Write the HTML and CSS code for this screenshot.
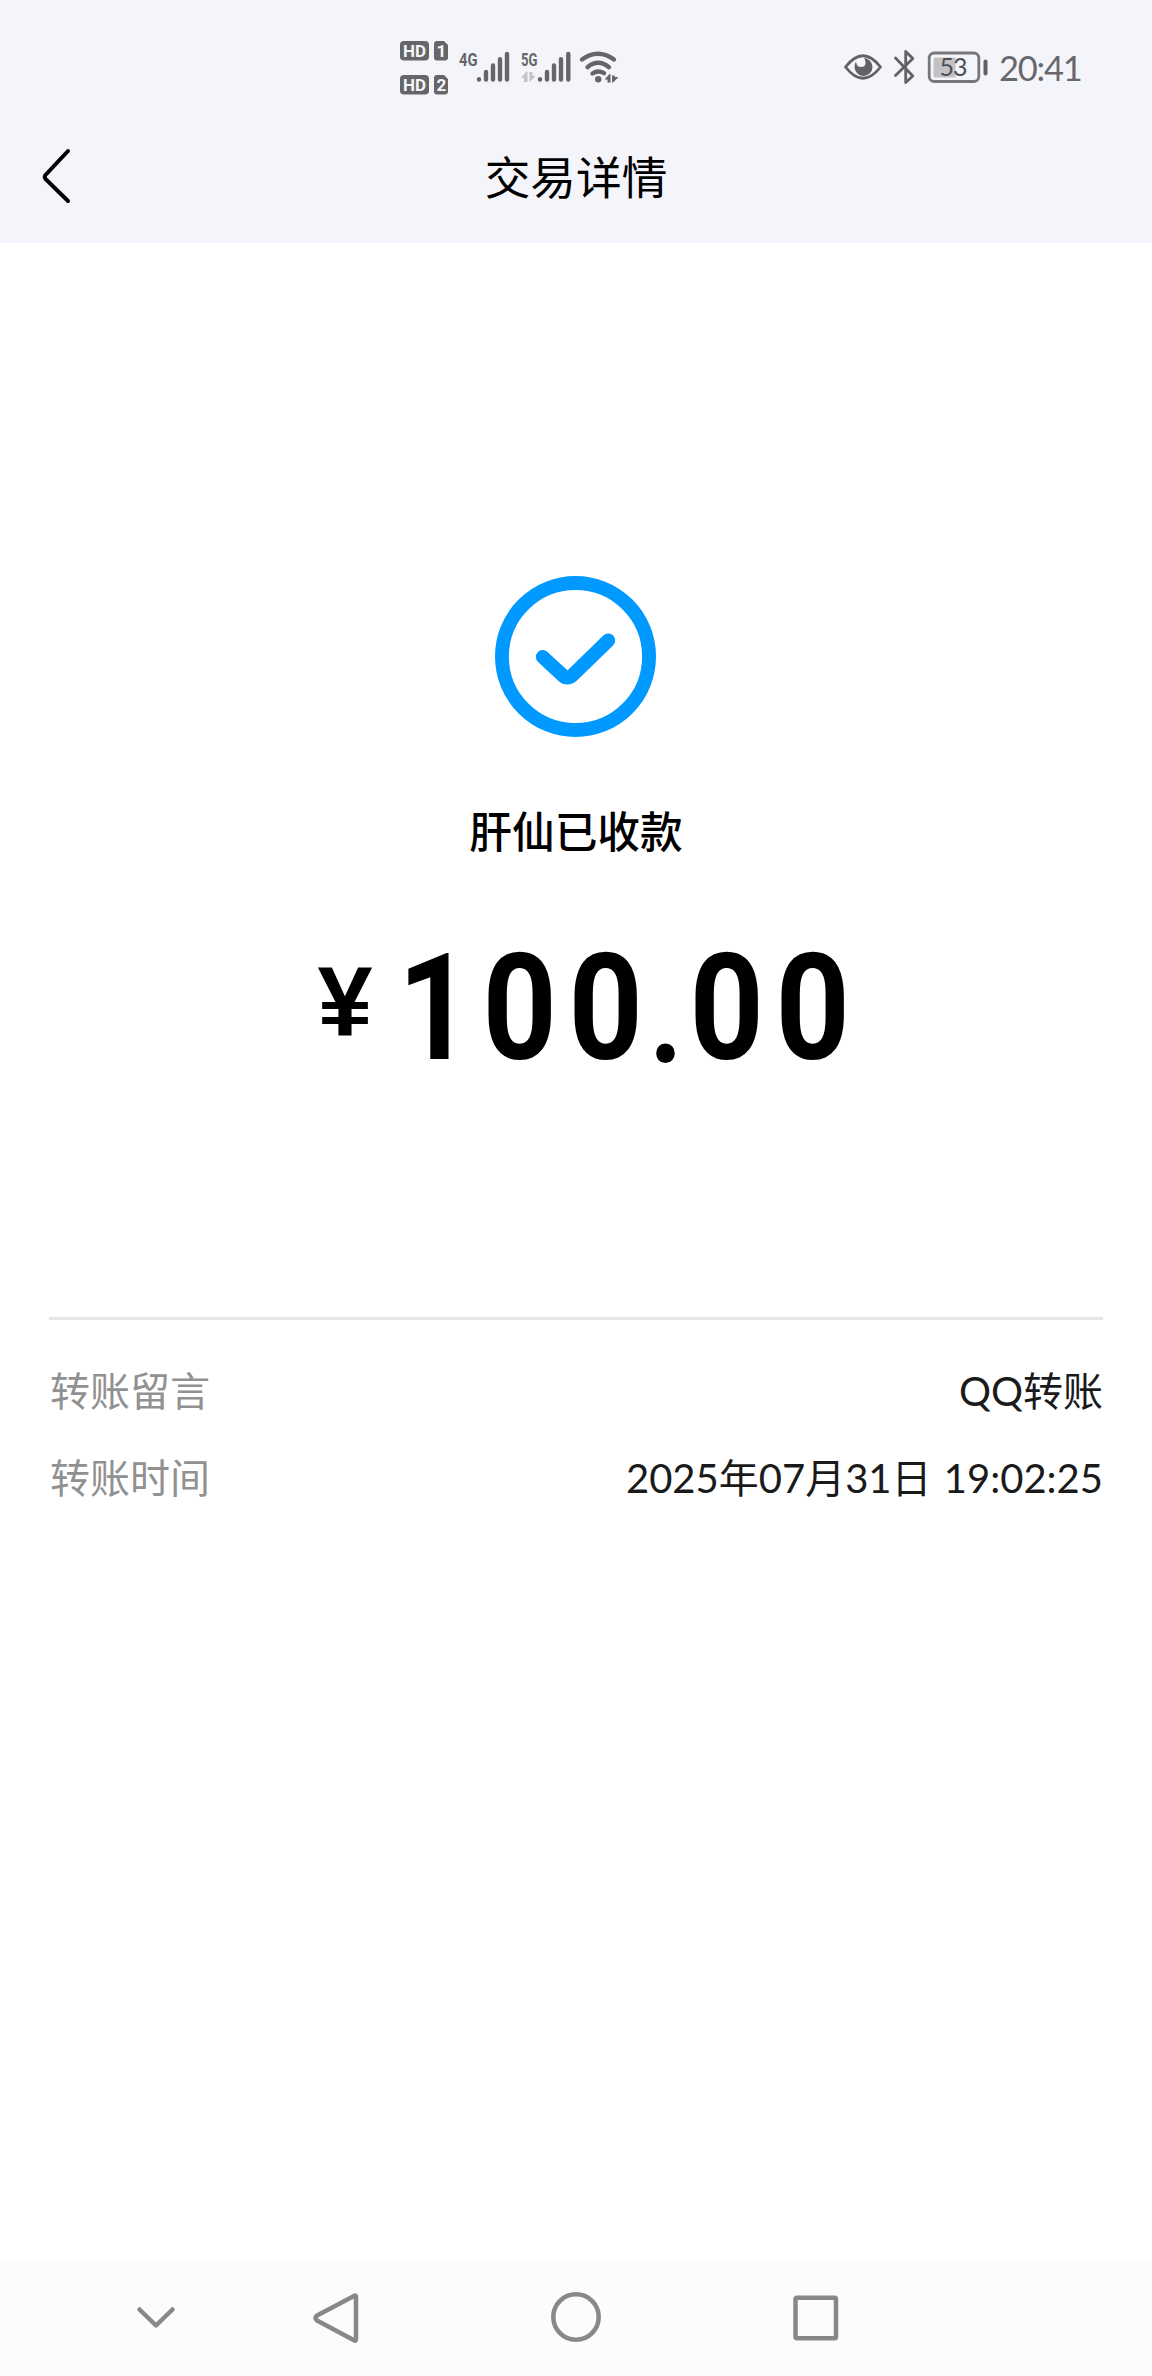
FILE: index.html
```html
<!DOCTYPE html>
<html lang="zh-CN">
<head>
<meta charset="utf-8">
<meta name="viewport" content="width=device-width, initial-scale=1">
<title>交易详情</title>
<link rel="stylesheet" href="styles.css">
</head>
<body>
<header class="top">
  <div class="status-bar">
    <svg class="status-left" viewBox="390 30 240 75" width="240" height="75" fill="#666669">
      <rect x="400" y="41" width="29" height="19.5" rx="4"/>
      <rect x="400" y="75" width="29" height="19.5" rx="4"/>
      <path d="M437 41h7l4 4v12.500a3 3 0 0 1-3 3h-8a3 3 0 0 1-3-3v-13.500a3 3 0 0 1 3-3z"/>
      <path d="M437 75h7l4 4v12.500a3 3 0 0 1-3 3h-8a3 3 0 0 1-3-3v-13.500a3 3 0 0 1 3-3z"/>
      <g class="badge-text" fill="#f4f5fa">
        <text x="403" y="57" textLength="23" lengthAdjust="spacingAndGlyphs">HD</text>
        <text x="403" y="91" textLength="23" lengthAdjust="spacingAndGlyphs">HD</text>
        <text x="436.500" y="57">1</text>
        <text x="436.500" y="91">2</text>
      </g>
      <g class="net-text">
        <text x="459" y="65.500" textLength="18.500" lengthAdjust="spacingAndGlyphs">4G</text>
        <text x="521" y="65.500" textLength="16.500" lengthAdjust="spacingAndGlyphs">5G</text>
      </g>
      <g fill="none" stroke="#666669" stroke-width="4.400" stroke-linecap="round">
        <path d="M479 79.300v.2M486 72v7.500M493 65.500v14M500 59.300v20.200M507 54v25.500"/>
        <path d="M540 79.300v.2M547 72v7.500M554 65.500v14M561 59.300v20.200M568.300 54v25.500"/>
        <path d="M582 59.500Q598 48 614 59.500M587.500 67.200Q598 58.500 609 67.200M592.500 73.500Q598 69.800 604 73.200"/>
      </g>
      <circle cx="598.200" cy="79.200" r="3.200"/>
      <path fill="#c3c4c8" d="M521 78l5.500-6.500h1v10.500h-3.500v-4zM529.500 72h3v4h2.500v1l-5.500 5z"/>
      <path d="M604.500 79.500l5-5.500h1v8.500h-3v-3zM612 75.500h2.800v1.500h3.200v.8l-5 4.700h-1z"/>
    </svg>
    <div class="status-right">
      <svg viewBox="840 40 150 50" width="150" height="50" fill="none" stroke="#626266" stroke-width="2.800" stroke-linejoin="round" stroke-linecap="round">
        <path d="M845.500 67Q863 44.500 880.500 67Q863 89.500 845.500 67z"/>
        <path fill="#626266" stroke="none" d="M864 58a9 9 0 1 1-9.500 9q0-3 1.500-5.500q.5 5.500 5 5.500q5 0 4.500-5q-.3-2.500-1.500-4z"/>
        <path d="M895.500 58L912.800 76L905.700 82.500V51.500L912.800 58.500L895.500 75.500"/>
        <rect x="929.200" y="53" width="49.600" height="28.500" rx="5" stroke="#77777b"/>
        <path fill="#c2c2c5" stroke="none" d="M935 57.500h20.500v20h-20.500a1.500 1.500 0 0 1-1.500-1.500v-17a1.500 1.500 0 0 1 1.500-1.500z"/>
        <path d="M985.500 61.500v12" stroke-width="4"/>
        <text class="battery-text" x="939.500" y="76.200" fill="#505054" stroke="none" textLength="28">53</text>
      </svg>
      <span class="clock">20:41</span>
    </div>
  </div>
  <div class="title-bar">
    <svg class="back" viewBox="0 0 32 58" width="32" height="58"><path d="M28 4L5.500 28Q4 30 5.500 32L28 54" fill="none" stroke="#000" stroke-width="4" stroke-linecap="round"/></svg>
    <h1 class="title">交易详情</h1>
  </div>
</header>
<main class="content">
  <svg class="success" viewBox="0 0 160 160" width="161" height="161" fill="none" stroke="#0099ff" stroke-width="13.800" stroke-linecap="round">
    <circle cx="80" cy="80" r="73.100"/>
    <path d="M47.500 80.500L67.500 99Q72 103 76.500 99L112.500 64"/>
  </svg>
  <p class="state">肝仙已收款</p>
  <div class="amount">
    <span class="yen">¥</span><span class="digit one">1</span><span class="digit">0</span><span class="digit">0</span><span class="digit dot">.</span><span class="digit">0</span><span class="digit">0</span>
  </div>
  <dl class="details">
    <div class="row"><dt>转账留言</dt><dd>QQ转账</dd></div>
    <div class="row"><dt>转账时间</dt><dd>2025年07月31日 19:02:25</dd></div>
  </dl>
</main>
<nav class="nav-bar">
  <svg viewBox="0 0 60 60" width="60" height="60"><path d="M13.500 22.500L30 38.500L46.500 22.500"/></svg>
  <svg viewBox="0 0 60 60" width="60" height="60"><path d="M48.500 8.700L11 28.500Q8 31 11 33.500L48.500 53.500Q50 54 50 52.500V10Q50 8 48.500 8.700z"/></svg>
  <svg viewBox="0 0 60 60" width="60" height="60"><circle cx="30" cy="30" r="22.700"/></svg>
  <svg viewBox="0 0 60 60" width="60" height="60"><rect x="9.500" y="10.800" width="40.500" height="40.500" rx="1.500"/></svg>
</nav>
</body>
</html>
```
FILE: styles.css
```css
* {
  box-sizing: border-box;
}

body {
  margin: 0;
  min-height: 2376px;
  display: flex;
  flex-direction: column;
  background: #fff;
  color: #000;
  font-family: Lato, "Noto Sans CJK SC", sans-serif;
}

.top {
  height: 243px;
  background: #f4f5fa;
}

.status-bar {
  height: 120px;
  padding: 30px 72px 0 390px;
  display: flex;
  justify-content: space-between;
  align-items: flex-start;
}

.badge-text,
.net-text {
  font-family: Roboto, sans-serif;
  font-weight: 700;
  font-size: 17px;
}

.net-text {
  font-size: 18.500px;
}

.battery-text {
  font-family: Lato, sans-serif;
  font-size: 25px;
}

.status-right {
  display: flex;
  padding-top: 10px;
}

.clock {
  width: 90px;
  padding-left: 9px;
  font-size: 34.500px;
  line-height: 55px;
  letter-spacing: -1.200px;
  color: #68686c;
}

.title-bar {
  height: 122px;
  display: grid;
  grid-template-columns: 40px 1fr 40px;
  align-items: center;
  padding: 0 38px;
}

.back {
  margin: -11px 0 0 2px;
}

.title {
  margin: -13px 0 0;
  text-align: center;
  font-size: 45.700px;
  line-height: 60px;
  font-weight: 400;
  font-family: "Noto Sans CJK SC", sans-serif;
}

.content {
  flex: 1;
  display: flex;
  flex-direction: column;
  align-items: center;
  padding: 333px 49px 0;
}

.success {
  margin-right: 1px;
}

.state {
  margin: 62px 0 0;
  font: 500 42.700px/60px "Noto Sans CJK SC", sans-serif;
}

.amount {
  display: flex;
  height: 176px;
  margin-top: 61px;
  font-family: Roboto, sans-serif;
  font-weight: 700;
  line-height: 176px;
  align-self: flex-start;
  padding-left: 252px;
}

.yen {
  width: 92px;
  padding-right: 4px;
  text-align: center;
  font-family: "Liberation Sans", sans-serif;
  font-size: 99px;
  line-height: 162px;
}

.digit {
  width: 85.500px;
  display: flex;
  justify-content: center;
  font-size: 149px;
  transform: scaleX(.87);
}

.one {
  width: 84px;
}

.dot {
  width: 36px;
  font-size: 134px;
  line-height: 194px;
}

.details {
  align-self: stretch;
  margin: 221px 0 0;
  padding-top: 31px;
  border-top: 3px solid #e5e5e5;
}

.row {
  height: 87px;
  display: flex;
  justify-content: space-between;
  font-size: 40px;
  line-height: 80px;
}

.row dt {
  padding-left: 1px;
  color: #919191;
}

.row dd {
  margin: 0;
  color: #1a1a1a;
  word-spacing: 2px;
}

.nav-bar {
  height: 117px;
  padding: 28px 0 0 126px;
  display: grid;
  grid-template-columns: 180px 240px 240px 60px;
  background: #fcfcfc;
}

.nav-bar svg {
  fill: none;
  stroke: #888;
  stroke-width: 4.500;
  stroke-linecap: round;
  stroke-linejoin: round;
}
```
